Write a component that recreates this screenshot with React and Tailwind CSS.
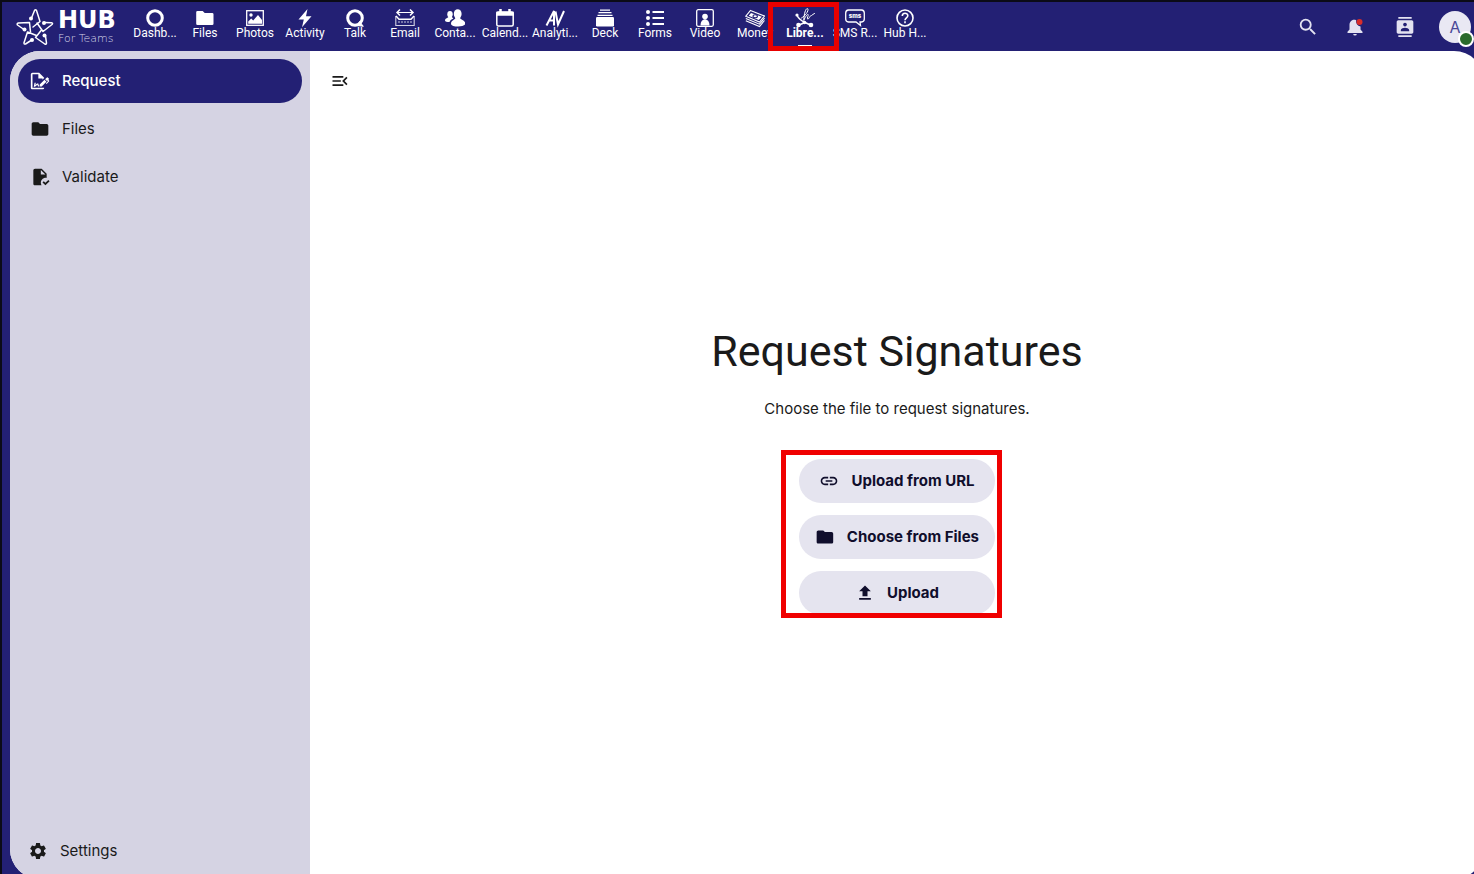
import React from 'react';
import { MdContacts, MdFolder, MdLink, MdMenuOpen, MdSearch, MdSettings, MdUpload } from 'react-icons/md';

const svgProps = { viewBox: '0 0 20 20', fill: 'none', stroke: 'currentColor', className: 'w-5 h-5', 'aria-hidden': true };

/* App icons, all drawn on a 20x20 grid */
const icons = {
  dashboard: (
    <svg {...svgProps} strokeWidth="3"><circle cx="10" cy="10" r="7.3" /></svg>
  ),
  files: (
    <svg {...svgProps} fill="currentColor" stroke="none">
      <path d="M2.5 3h5.2l2 2h7.500a1.300 1.300 0 0 1 1.300 1.300v9.400a1.300 1.300 0 0 1-1.300 1.300H2.500a1.300 1.300 0 0 1-1.300-1.300V4.300A1.300 1.300 0 0 1 2.500 3z" />
    </svg>
  ),
  photos: (
    <svg {...svgProps} strokeWidth="1.3">
      <rect x="1.7" y="2.7" width="16.6" height="14.6" />
      <circle cx="6" cy="7" r="1.7" fill="currentColor" stroke="none" />
      <path d="M3.2 15.8v-2.3l3-3 2 2 4.8-5.5 4 5v3.8z" fill="currentColor" stroke="none" />
    </svg>
  ),
  activity: (
    <svg {...svgProps} fill="currentColor" stroke="none"><path d="M12.5 1 3.5 11.5h5.3L7 19.3 16.5 8.3H11z" /></svg>
  ),
  talk: (
    <svg {...svgProps} strokeWidth="3">
      <circle cx="10" cy="10" r="7.3" />
      <path d="M14.5 13.5 18.3 18.3 12.5 17.5z" fill="currentColor" strokeWidth="1" />
    </svg>
  ),
  email: (
    <svg {...svgProps} strokeWidth="1.1">
      <path d="M.8 8v9.500h18.400V8" opacity=".8" />
      <path d="M1 8l3 3.300h12L19 8" strokeWidth="1.400" />
      <path d="M2 4.500h16" strokeWidth="1" />
      <path d="M5 1.500 2 4.500l3 3M15 1.500l3 3-3 3" strokeWidth="1.500" />
      <path d="M3 14h14" strokeWidth="1.600" strokeDasharray="2 1" opacity=".5" />
    </svg>
  ),
  contacts: (
    <svg {...svgProps} fill="currentColor" stroke="none">
      <ellipse cx="12.7" cy="6" rx="3.9" ry="4.8" />
      <path d="M10.5 9.5H15c0 2.5 5.3 2.5 5.3 6.2 0 3.800-14.300 3.800-14.300 0 0-3.700 4.500-3.700 4.500-6.200z" />
      <ellipse cx="5" cy="6.200" rx="2.700" ry="3.300" />
      <path d="M3.500 8.500H7c0 1 .8 1.500 1.300 2-2 1-3.300 1.800-3.800 3.500-2.500 0-4.500-.5-4.500-1.500 0-2.500 3.500-2.500 3.500-4z" />
    </svg>
  ),
  calendar: (
    <svg {...svgProps} strokeWidth="1.5">
      <rect x="1.8" y="4" width="16.4" height="14" rx="1.5" />
      <path d="M2 4.500h16V7H2z" fill="currentColor" />
      <path d="M5.500 1v5M14.500 1v5" strokeWidth="2.500" />
    </svg>
  ),
  analytics: (
    <svg {...svgProps} strokeWidth="2">
      <path d="M1.500 17.500 9 3v14.500M4 12.500h5M10.500 3.500l2.500 13L19 3" />
    </svg>
  ),
  deck: (
    <svg {...svgProps} strokeWidth="1.3">
      <rect x="1" y="9" width="18" height="9.5" rx="1.2" fill="currentColor" stroke="none" />
      <path d="M2.500 7.300h15M3.500 4.700h13M5 2.100h10" />
    </svg>
  ),
  forms: (
    <svg {...svgProps} strokeWidth="2">
      <path d="M7.500 4H19M7.500 10H19M7.500 16H19" />
      <g fill="currentColor" stroke="none"><circle cx="3" cy="4" r="2" /><circle cx="3" cy="10" r="2" /><circle cx="3" cy="16" r="2" /></g>
    </svg>
  ),
  video: (
    <svg {...svgProps} strokeWidth="1.3">
      <rect x="1.7" y="1.7" width="16.6" height="16.6" rx="1.5" />
      <circle cx="10" cy="8.500" r="2.800" fill="currentColor" stroke="none" />
      <path d="M5.500 17.500c0-8.500 9-8.500 9 0z" fill="currentColor" stroke="none" />
    </svg>
  ),
  money: (
    <svg {...svgProps} strokeWidth="1.1">
      <path d="M5.500 2.500 19.500 8 14.500 14 .8 8.200z" />
      <path d="M.8 10.500l13.700 5.700 5-6M.8 12.800l13.700 5.700 5-6" />
      <path d="M6 5 16.800 8.800 13.800 12 3.800 7.800z" fill="currentColor" stroke="none" />
      <ellipse cx="10.200" cy="8.300" rx="2.200" ry="1.500" stroke="#232074" />
    </svg>
  ),
  libresign: (
    <svg {...svgProps} strokeWidth="1" strokeLinecap="round">
      <path d="M2 7.500c1.500 3 4 5 8 7l5.500 2.500M10 14.500l-6 2.500" strokeWidth="1.500" />
      <path d="M6.500 10C10 8 14 3 12.800.8 11-.5 9 5 8.800 12.500c1.500-4 3.500-6.500 4.300-6s-1.800 4.500-.3 4.500 1.700-3 2.700-3 1-1 4-2.500" />
      <g fill="currentColor" stroke="none">
        <circle cx="2" cy="7" r="1.600" /><circle cx="3.500" cy="17" r="2.300" /><circle cx="9.500" cy="14.500" r="1.800" /><circle cx="16" cy="17" r="2.300" />
      </g>
    </svg>
  ),
  sms: (
    <svg {...svgProps} strokeWidth="1.3">
      <path d="M3.500 2h13A3 3 0 0 1 19.300 5v6a3 3 0 0 1-2.800 3H15l.5 3.500L11 14H3.500A3 3 0 0 1 .7 11V5A3 3 0 0 1 3.500 2z" />
      <text x="10" y="10" textAnchor="middle" fill="currentColor" stroke="none" fontFamily="Inter, sans-serif" fontSize="6" fontWeight="800">sms</text>
    </svg>
  ),
  help: (
    <svg {...svgProps} strokeWidth="1.6">
      <circle cx="10" cy="10" r="8" />
      <path d="M7.300 8c0-3.700 5.500-3.500 5.500-.3 0 2-2.800 2.300-2.800 4.500M10 13.300v2" />
    </svg>
  ),
};

const apps = [
  { icon: 'dashboard', label: 'Dashb...' },
  { icon: 'files', label: 'Files' },
  { icon: 'photos', label: 'Photos' },
  { icon: 'activity', label: 'Activity' },
  { icon: 'talk', label: 'Talk' },
  { icon: 'email', label: 'Email' },
  { icon: 'contacts', label: 'Conta...' },
  { icon: 'calendar', label: 'Calend...' },
  { icon: 'analytics', label: 'Analyti...' },
  { icon: 'deck', label: 'Deck' },
  { icon: 'forms', label: 'Forms' },
  { icon: 'video', label: 'Video' },
  { icon: 'money', label: 'Money' },
  { icon: 'libresign', label: 'Libre...', active: true },
  { icon: 'sms', label: 'SMS R...' },
  { icon: 'help', label: 'Hub H...' },
];

function Logo() {
  return (
    <a href="#" className="flex items-center gap-1 w-[114px] shrink-0 text-white">
      <svg viewBox="0 0 38 38" className="w-[38px] h-[38px] shrink-0" fill="none" stroke="currentColor" strokeWidth="1.5" strokeLinejoin="round" strokeLinecap="round" aria-hidden="true">
        <path d="M15.500 10 18.500 2.500q1-1.500 2 0L24 13.500l-7 5.500" />
        <path d="M28 14.500l7.500.2q1.800.3.5 1.800L27 23.500 21 15" />
        <path d="M29.500 28l1 7q0 1.700-1.700 1L19.500 29.500 25.500 22" />
        <path d="M16.500 31.500 9.500 36q-1.700.5-1.500-1.300L11.500 24l9 3.500" />
        <path d="M8 21.500 1.500 17q-1-1.500.8-2l11.200-.5L14.500 24" />
        <g fill="currentColor" stroke="none">
          <circle cx="15" cy="10.5" r="2" /><circle cx="28" cy="15" r="2" /><circle cx="28.5" cy="27.5" r="2" /><circle cx="16" cy="32" r="2" /><circle cx="8.5" cy="21.5" r="2" />
        </g>
      </svg>
      <span className="flex flex-col font-['DejaVu_Sans',sans-serif]">
        <span className="text-2xl leading-6 font-bold">HUB</span>
        <span className="text-[11px] leading-[14px] font-extralight text-[#d5d4e8] whitespace-nowrap">For Teams</span>
      </span>
    </a>
  );
}

function Header() {
  return (
    <header className="flex items-center h-[49px] pl-[14px]">
      <Logo />
      <nav className="flex text-white font-['Roboto',sans-serif]">
        {apps.map((app) => (
          <a key={app.label} href="#" className="relative flex flex-col items-center w-[50px] h-[49px] pt-1.5">
            {icons[app.icon]}
            <span className={app.active ? 'text-xs leading-[10px] font-bold whitespace-nowrap' : 'text-xs leading-[10px] whitespace-nowrap'}>
              {app.label}
            </span>
            {app.active && (
              <>
                <span className="mt-[7px] w-3.5 h-px bg-white" />
                <span className="absolute z-10 top-0 -left-3 w-[71px] h-[49px] border-[5px] border-[#e80000]" />
              </>
            )}
          </a>
        ))}
      </nav>

      <div className="ml-auto flex items-center text-[#e3e2f1]">
        <button aria-label="Search" className="w-11 flex justify-center"><MdSearch className="w-[22px] h-[22px]" /></button>
        <button aria-label="Notifications" className="w-[50px] flex justify-center">
          <svg viewBox="0 0 20 20" className="w-5 h-5" fill="currentColor" aria-hidden="true">
            <path d="M2.500 16h15v-1.200l-2-2.300V9.500a5 5 0 0 1-4.300-6.300C6.800 1.800 4.500 5 4.500 8v4.500l-2 2.300zM8.200 17h3.600a1.800 1.500 0 0 1-3.600 0z" />
            <circle cx="14.5" cy="5" r="3" fill="#d92d2a" />
          </svg>
        </button>
        <button aria-label="Contacts" className="w-[50px] flex justify-center"><MdContacts className="w-5 h-5" /></button>
        <button aria-label="Account" className="relative ml-1.5 w-[38px] flex justify-center">
          <span className="w-8 h-8 rounded-full bg-[#e9e8f3] text-[#4a4796] flex items-center justify-center text-base">A</span>
          <span className="absolute right-0 -bottom-1 w-4 h-4 rounded-full border-2 border-white bg-[#2a6b2c]" />
        </button>
      </div>
    </header>
  );
}

function Sidebar() {
  return (
    <aside className="w-[300px] shrink-0 flex flex-col justify-between bg-[#d5d3e3] px-2 pt-2 pb-1.5">
      <nav className="flex flex-col gap-1">
        <a href="#" className="flex items-center gap-3 h-11 px-3 rounded-full bg-[#232074] text-white font-medium">
          <svg viewBox="0 0 24 24" className="w-5 h-5" fill="currentColor" aria-hidden="true">
            <path d="M19.7 12.9L14 18.6H11.7V16.3L17.4 10.6L19.7 12.9M23.1 12.1C23.1 12.4 22.8 12.7 22.5 13L20 15.5L19.1 14.6L21.7 12L21.1 11.4L20.4 12.1L18.1 9.8L20.3 7.7C20.5 7.5 20.9 7.5 21.2 7.7L22.6 9.1C22.8 9.3 22.8 9.7 22.6 9.9C22.4 10.1 22.2 10.3 22.2 10.5C22.2 10.7 22.4 10.9 22.6 11.1C22.9 11.5 23.2 11.8 23.1 12.1M3 20V4H10V9H15V10.5L17 8.5V8L11 2H3C1.9 2 1 2.9 1 4V20C1 21.1 1.9 22 3 22H15C16.1 22 17 21.1 17 20H3M11 17.1C10.8 17.1 10.6 17.2 10.5 17.2L10 15H8.5L6.4 16.7L7 14H5.5L4.5 19H6L8.9 16.4L9.5 18.7H10.5L11 18.6V17.1Z" />
          </svg>
          Request
        </a>
        <a href="#" className="flex items-center gap-3 h-11 px-3">
          <MdFolder className="w-5 h-5" />
          Files
        </a>
        <a href="#" className="flex items-center gap-3 h-11 px-3">
          <svg viewBox="0 0 24 24" className="w-5 h-5" fill="currentColor" aria-hidden="true">
            <path fillRule="evenodd" d="M23.5 17L18.5 22L15 18.5L16.5 17L18.5 19L22 15.5L23.5 17M13 19C13 15.69 15.69 13 19 13C19.34 13 19.67 13.03 20 13.09V8L14 2H6C4.89 2 4 2.89 4 4V20C4 21.11 4.89 22 6 22H13.81C13.3 21.12 13 20.1 13 19M13 3.5L18.5 9H13V3.5Z" />
          </svg>
          Validate
        </a>
      </nav>
      <button className="flex items-center gap-3 h-11 px-2.5">
        <MdSettings className="w-5 h-5" />
        Settings
      </button>
    </aside>
  );
}

function RequestPicker() {
  const button = 'flex items-center justify-center gap-3 h-11 px-4 rounded-full bg-[#e5e4ef] text-[#100e2c] font-bold whitespace-nowrap';
  return (
    <main className="relative flex-1 flex flex-col items-center justify-center pb-1">
      <button aria-label="Toggle navigation" className="absolute top-5 left-5 w-5 h-5">
        <MdMenuOpen className="w-5 h-5" />
      </button>
      <h1 className="text-[43px] leading-[80px] font-['Roboto',sans-serif]">Request Signatures</h1>
      <p className="mt-1.5 leading-6">Choose the file to request signatures.</p>
      <div className="relative mt-[38px] w-[196px] flex flex-col gap-3">
        <button className={button}><MdLink className="w-5 h-5" />Upload from URL</button>
        <button className={button}><MdFolder className="w-5 h-5" />Choose from Files</button>
        <button className={button}><MdUpload className="w-5 h-5" />Upload</button>
        <span className="absolute -top-[9px] -bottom-[3px] -left-[18px] -right-[7px] border-[5px] border-[#f00000] pointer-events-none" />
      </div>
    </main>
  );
}

export default function App() {
  return (
    <div className="h-screen flex flex-col overflow-hidden border-t-2 border-l-2 border-[#0b0b16] bg-[#232074] text-[#1a1a1a] text-[15px] font-['Inter',sans-serif]">
      <Header />
      {/* The content panel bleeds past the right and bottom edges of the window */}
      <div className="flex-1 flex ml-2 -mr-[10px] -mb-[5px] rounded-[30px] overflow-hidden bg-white">
        <Sidebar />
        <RequestPicker />
      </div>
    </div>
  );
}
